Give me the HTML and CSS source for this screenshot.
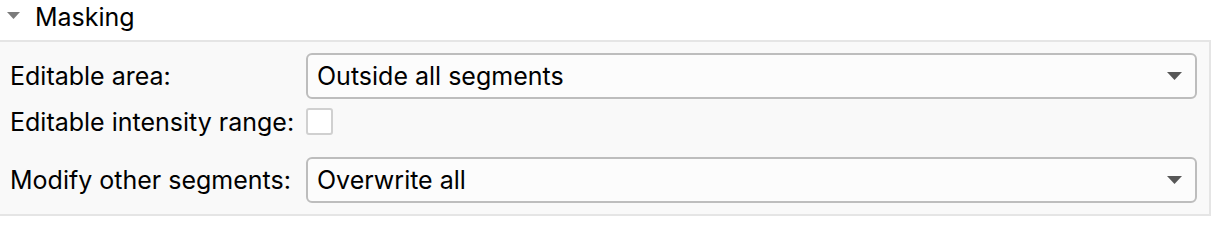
FILE: index.html
```html
<!DOCTYPE html>
<html>
<head>
<meta charset="utf-8">
<link rel="stylesheet" href="styles.css">
</head>
<body>
<div class="section">
  <div class="header">
    <svg class="disclosure" width="13" height="7" viewBox="0 0 13 7"><polygon points="0,0 13,0 6.5,7" fill="#7b7b7b"/></svg>
    <span class="title">Masking</span>
  </div>
  <div class="panel">
    <div class="row row-combo">
      <span class="label">Editable area:</span>
      <div class="combo">
        <span class="combo-text">Outside all segments</span>
        <svg class="caret" width="15" height="8" viewBox="0 0 15 8"><polygon points="0,0 15,0 7.5,8" fill="#575757"/></svg>
      </div>
    </div>
    <div class="row row-check">
      <span class="label">Editable intensity range:</span>
      <span class="checkbox"></span>
    </div>
    <div class="row row-combo row-last">
      <span class="label">Modify other segments:</span>
      <div class="combo">
        <span class="combo-text">Overwrite all</span>
        <svg class="caret" width="15" height="8" viewBox="0 0 15 8"><polygon points="0,0 15,0 7.5,8" fill="#575757"/></svg>
      </div>
    </div>
  </div>
</div>
</body>
</html>
```
FILE: styles.css
```css
html, body {
  margin: 0;
  padding: 0;
  background: #ffffff;
}
body {
  font-family: Inter, "Liberation Sans", sans-serif;
  font-size: 25px;
  color: #000000;
}
.section {
  width: 1212px;
}
.header {
  height: 40px;
  display: flex;
  align-items: center;
  padding-left: 7px;
  box-sizing: border-box;
}
.disclosure {
  margin-top: -9px;
  flex: none;
}
.title {
  margin-left: 15px;
  margin-top: -6px;
}
.panel {
  box-sizing: border-box;
  width: 1211px;
  height: 176px;
  background: #f9f9f9;
  border: 2px solid #e5e5e5;
  border-left: none;
  padding: 11px 12px 11px 10px;
  display: flex;
  flex-direction: column;
}
.row {
  display: flex;
  align-items: center;
}
.row-combo {
  height: 46px;
}
.row-check {
  height: 27px;
  margin-top: 9px;
  margin-bottom: 22px;
}
.label {
  flex: none;
  width: 296px;
  white-space: nowrap;
}
.combo {
  flex: 1;
  height: 46px;
  box-sizing: border-box;
  border: 2px solid #bdbdbd;
  border-radius: 6px;
  background: #fcfcfc;
  display: flex;
  align-items: center;
  padding: 0 13px 0 9px;
}
.combo-text {
  flex: 1;
  white-space: nowrap;
}
.caret {
  flex: none;
}
.checkbox {
  width: 27px;
  height: 27px;
  box-sizing: border-box;
  border: 2px solid #d0d0d0;
  border-radius: 3px;
  background: #ffffff;
}
```
